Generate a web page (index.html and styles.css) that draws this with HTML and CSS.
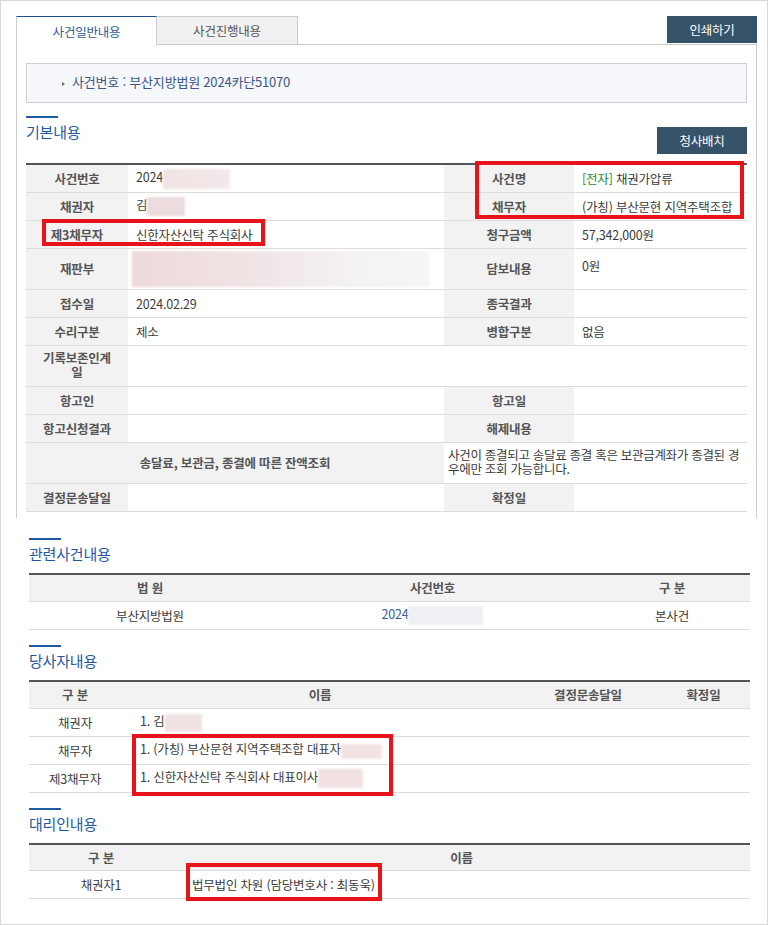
FILE: index.html
```html
<!DOCTYPE html>
<html lang="ko">
<head>
  <meta charset="UTF-8">
  <title>사건일반내용</title>
  <link rel="stylesheet" href="styles.css">
</head>
<body>
  <div class="frame">
    <div class="capture-top">
      <div class="tabbar">
        <div class="tabs">
          <a class="tab on">사건일반내용</a>
          <a class="tab">사건진행내용</a>
        </div>
        <button class="btn btn-print">인쇄하기</button>
      </div>
      <div class="panel">
        <div class="case-box"><span class="arrow"></span>사건번호 : 부산지방법원 2024카단51070</div>
        <div class="sec-head">
          <h3 class="sec-title">기본내용</h3>
          <button class="btn btn-map">청사배치</button>
        </div>
        <table class="tbl tbl-basic">
          <colgroup>
            <col class="c1"><col class="c2"><col class="c3"><col class="c4">
          </colgroup>
          <tr>
            <th>사건번호</th>
            <td>2024<span class="blur blur-no"></span></td>
            <th>사건명</th>
            <td><span class="tag">[전자]</span> 채권가압류</td>
          </tr>
          <tr>
            <th>채권자</th>
            <td>김<span class="blur blur-kim"></span></td>
            <th>채무자</th>
            <td>(가칭) 부산문현 지역주택조합</td>
          </tr>
          <tr>
            <th>제3채무자</th>
            <td>신한자산신탁 주식회사</td>
            <th>청구금액</th>
            <td>57,342,000원</td>
          </tr>
          <tr class="tall">
            <th>재판부</th>
            <td><span class="blur blur-court"></span></td>
            <th>담보내용</th>
            <td class="top">0원</td>
          </tr>
          <tr>
            <th>접수일</th>
            <td>2024.02.29</td>
            <th>종국결과</th>
            <td></td>
          </tr>
          <tr>
            <th>수리구분</th>
            <td>제소</td>
            <th>병합구분</th>
            <td>없음</td>
          </tr>
          <tr class="tall">
            <th class="wrap">기록보존인계<br>일</th>
            <td colspan="3"></td>
          </tr>
          <tr>
            <th>항고인</th>
            <td></td>
            <th>항고일</th>
            <td></td>
          </tr>
          <tr>
            <th>항고신청결과</th>
            <td></td>
            <th>해제내용</th>
            <td></td>
          </tr>
          <tr class="tall">
            <th colspan="2">송달료, 보관금, 종결에 따른 잔액조회</th>
            <td colspan="2" class="notice">사건이 종결되고 송달료 종결 혹은 보관금계좌가 종결된 경<br>우에만 조회 가능합니다.</td>
          </tr>
          <tr>
            <th>결정문송달일</th>
            <td></td>
            <th>확정일</th>
            <td></td>
          </tr>
        </table>
      </div>
    </div>

    <div class="capture-bottom">
      <h3 class="sec-title">관련사건내용</h3>
      <table class="tbl tbl-list tbl-related">
        <colgroup>
          <col class="r1"><col class="r2"><col class="r3">
        </colgroup>
        <tr>
          <th>법 원</th>
          <th>사건번호</th>
          <th>구 분</th>
        </tr>
        <tr>
          <td>부산지방법원</td>
          <td><a class="link">2024</a><span class="blur blur-rel"></span></td>
          <td>본사건</td>
        </tr>
      </table>

      <h3 class="sec-title">당사자내용</h3>
      <table class="tbl tbl-list tbl-party">
        <colgroup>
          <col class="p1"><col class="p2"><col class="p3"><col class="p4">
        </colgroup>
        <tr>
          <th>구 분</th>
          <th>이름</th>
          <th>결정문송달일</th>
          <th>확정일</th>
        </tr>
        <tr>
          <td>채권자</td>
          <td class="name">1. 김<span class="blur blur-pkim"></span></td>
          <td></td>
          <td></td>
        </tr>
        <tr>
          <td>채무자</td>
          <td class="name">1. (가칭) 부산문현 지역주택조합 대표자<span class="blur blur-rep"></span></td>
          <td></td>
          <td></td>
        </tr>
        <tr>
          <td>제3채무자</td>
          <td class="name">1. 신한자산신탁 주식회사 대표이사<span class="blur blur-ceo"></span></td>
          <td></td>
          <td></td>
        </tr>
      </table>

      <h3 class="sec-title">대리인내용</h3>
      <table class="tbl tbl-list tbl-agent">
        <colgroup>
          <col class="a1"><col class="a2">
        </colgroup>
        <tr class="head-short">
          <th>구 분</th>
          <th>이름</th>
        </tr>
        <tr>
          <td>채권자1</td>
          <td class="name">법무법인 차원 (담당변호사 : 최동욱)</td>
        </tr>
      </table>
    </div>
  </div>

  <!-- red annotation boxes over the capture -->
  <div class="mark mark-case"></div>
  <div class="mark mark-third"></div>
  <div class="mark mark-party"></div>
  <div class="mark mark-agent"></div>
</body>
</html>
```

FILE: styles.css
```css
* {
  box-sizing: border-box;
}

html, body {
  margin: 0;
  padding: 0;
  background-color: #fff;
}

body {
  position: relative;
  width: 776px;
  height: 925px;
  font-family: "Noto Sans CJK KR", "Noto Sans", sans-serif;
  font-size: 12.5px;
  letter-spacing: -0.2px;
  color: #3c3c3c;
}

.frame {
  width: 768px;
  height: 925px;
  border: 1px solid #d8d8d8;
  overflow: hidden;
}

/* first capture: tabs + basic info */
.capture-top {
  padding: 15px 10px 0 15px;
}

.tabbar {
  display: flex;
  justify-content: space-between;
  height: 28px;
}

.tabs {
  display: flex;
  align-items: flex-end;
}

.tab {
  width: 141px;
  height: 28px;
  display: flex;
  justify-content: center;
  align-items: center;
  border: 1px solid #ccc;
  border-bottom: none;
  background-color: #f1f1f1;
  color: #555;
  cursor: pointer;
}

.tab + .tab {
  border-left: none;
}

.tab.on {
  position: relative;
  height: 29px;
  margin-bottom: -1px;
  border-top-color: #1d4f8a;
  background-color: #fff;
  color: #2d5d98;
}

.btn {
  height: 27px;
  width: 90px;
  padding: 0;
  border: none;
  background-color: #37536a;
  color: #fff;
  font-family: inherit;
  font-size: 12.5px;
  letter-spacing: -0.2px;
  cursor: pointer;
}

.btn-print {
  align-self: flex-start;
}

.btn-map {
  align-self: flex-end;
}

.panel {
  width: 741px;
  border: 1px solid #ccc;
  border-bottom: none;
  padding: 18px 9px 6px 9px;
}

.case-box {
  height: 40px;
  display: flex;
  align-items: center;
  padding-left: 35px;
  padding-bottom: 3px;
  background-color: #f6f7fb;
  border: 1px solid #cdd1d8;
  color: #3a5688;
  font-size: 13px;
}

.arrow {
  width: 0;
  height: 0;
  margin: 5px 7px 0 0;
  border-top: 2px solid transparent;
  border-bottom: 2px solid transparent;
  border-left: 3px solid #666;
}

.sec-head {
  display: flex;
  justify-content: space-between;
  height: 38px;
  margin-top: 13px;
  margin-bottom: 9px;
}

.sec-title {
  margin: 0;
  font-size: 15px;
  font-weight: normal;
  line-height: 20px;
  color: #1f58a0;
}

.sec-title::before {
  content: "";
  display: block;
  width: 32px;
  height: 2px;
  margin-bottom: 4px;
  background-color: #1e5aa0;
}

/* tables */
.tbl {
  width: 721px;
  border-collapse: separate;
  border-spacing: 0;
  border-top: 2px solid #555;
  table-layout: fixed;
}

.tbl th,
.tbl td {
  height: 28px;
  padding: 0 8px;
  border-bottom: 1px solid #dcdcdc;
  font-weight: normal;
  line-height: 14px;
  white-space: nowrap;
}

.tbl th {
  background-color: #f2f2f2;
  color: #555;
  font-weight: 700;
  text-align: center;
}

.tbl-basic .c1 { width: 102px; }
.tbl-basic .c2 { width: 316px; }
.tbl-basic .c3 { width: 130px; }
.tbl-basic .c4 { width: 173px; }

.tbl-basic tr.tall th,
.tbl-basic tr.tall td {
  height: 41px;
}

.tbl-basic td.top {
  padding-bottom: 6px;
}

.tbl-basic th.wrap {
  line-height: 14px;
  padding-bottom: 3px;
}

.tbl-basic td.notice {
  padding: 0 0 3px 4px;
  line-height: 14px;
  letter-spacing: -0.3px;
}

.tag {
  color: #1f8a2e;
}

/* second capture: related lists */
.capture-bottom {
  padding: 20px 0 0 28px;
}

.capture-bottom .sec-title {
  margin-bottom: 9px;
}

.tbl-list + .sec-title {
  margin-top: 15px;
}

.tbl-list th {
  height: 27px;
}

.tbl-list td {
  text-align: center;
}

.tbl-list td.name {
  text-align: left;
  padding-left: 19px;
}

.tbl-list tr.head-short th {
  height: 26px;
}

.tbl-related .r1 { width: 242px; }
.tbl-related .r2 { width: 323px; }
.tbl-related .r3 { width: 156px; }

.tbl-party .p1 { width: 92px; }
.tbl-party .p2 { width: 398px; }
.tbl-party .p3 { width: 138px; }
.tbl-party .p4 { width: 93px; }

.tbl-agent .a1 { width: 144px; }
.tbl-agent .a2 { width: 577px; }

.link {
  color: #35599a;
}

/* masked personal data */
.blur {
  display: inline-block;
  vertical-align: middle;
  filter: blur(1px);
}

.blur-no {
  width: 67px;
  height: 20px;
  background: linear-gradient(90deg, #f1e3e4, #f3e9ea);
}

.blur-kim {
  width: 38px;
  height: 19px;
  background-color: #ecdcdd;
}

.blur-court {
  width: 297px;
  height: 36px;
  margin-left: -4px;
  background: linear-gradient(90deg, #eed9db 0%, #f0e4e5 40%, #f5f2f2 75%, #f6f6f6 100%);
}

.blur-rel {
  width: 75px;
  height: 19px;
  background-color: #eef0f4;
}

.blur-pkim {
  width: 37px;
  height: 18px;
  background-color: #f1e3e4;
}

.blur-rep {
  width: 41px;
  height: 15px;
  background-color: #f3e3e4;
}

.blur-ceo {
  width: 45px;
  height: 19px;
  background-color: #f1e1e2;
}

/* red annotation boxes */
.mark {
  position: absolute;
  border: 4px solid #e8141c;
}

.mark-case {
  left: 475px;
  top: 161px;
  width: 269px;
  height: 58px;
}

.mark-third {
  left: 42px;
  top: 219px;
  width: 223px;
  height: 27px;
}

.mark-party {
  left: 132px;
  top: 734px;
  width: 261px;
  height: 62px;
}

.mark-agent {
  left: 186px;
  top: 863px;
  width: 196px;
  height: 38px;
}
```
